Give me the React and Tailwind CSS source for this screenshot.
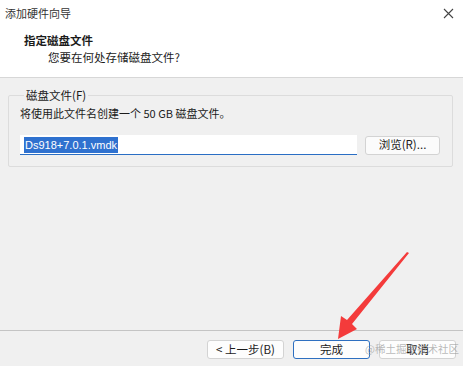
import React from "react";

const font = { fontFamily: '"Noto Sans CJK SC", "Noto Sans", sans-serif' };

function WinButton({ children, primary }) {
  return (
    <button
      className={`h-[19px] w-[77px] rounded-[3px] text-[11.5px] leading-none text-[#1b1b1b] flex items-center justify-center ${
        primary ? "border-[1.5px] border-[#2d6fc0] bg-[#fdfdfd]" : "border border-[#d3d3d3] bg-[#fdfdfd]"
      }`}
    >
      {children}
    </button>
  );
}

export default function App() {
  return (
    <div className="relative w-[463px] h-[366px] bg-[#f0f0f0] overflow-hidden flex flex-col text-[#1b1b1b]" style={font}>
      {/* header */}
      <div className="h-[78px] bg-white border-b border-[#d7d7d7] shrink-0">
        <div className="h-[26px] flex items-center justify-between pl-[5px] pr-[8px]">
          <span className="text-[11px] text-[#333]">添加硬件向导</span>
          <svg width="11" height="11" viewBox="0 0 11 11" className="mr-[1px]">
            <path d="M1 1 L10 10 M10 1 L1 10" stroke="#444" strokeWidth="1.1" />
          </svg>
        </div>
        <div className="pl-[24px] pt-[6px]">
          <div className="text-[11.5px] font-bold leading-[16px]">指定磁盘文件</div>
          <div className="pl-[24px] text-[11.5px] leading-[18px]">您要在何处存储磁盘文件?</div>
        </div>
      </div>

      {/* body */}
      <div className="flex-1 px-[8px] pt-[9px]">
        <fieldset className="border border-[#dcdcdc] rounded-[2px] px-[11px] pb-[11px] mr-[2px]">
          <legend className="ml-[4px] px-[2px] text-[11.5px] leading-[16px]">磁盘文件(F)</legend>
          <div className="text-[11px] leading-[18px] mt-[1px]">将使用此文件名创建一个 50 GB 磁盘文件。</div>
          <div className="flex items-center mt-[13px]">
            <div className="w-[337px] h-[20px] bg-white border-b-[1.5px] border-[#2a6ec4] flex items-center pl-[4px]">
              <span
                className="bg-[#2f71cf] text-white text-[11px] leading-[16px] px-[1px]"
                style={{ fontFamily: '"Liberation Sans", Arial, sans-serif' }}
              >
                Ds918+7.0.1.vmdk
              </span>
            </div>
            <button className="ml-[8px] h-[19px] w-[75px] rounded-[3px] border border-[#d3d3d3] bg-[#fbfbfb] text-[11.5px] leading-none flex items-center justify-center">
              浏览(R)...
            </button>
          </div>
        </fieldset>
      </div>

      {/* footer */}
      <div className="h-[36px] border-t border-[#c4c4c4] shrink-0 flex items-start justify-end gap-[9px] pr-[7px] pt-[9px]">
        <WinButton>&lt; 上一步(B)</WinButton>
        <WinButton primary>完成</WinButton>
        <WinButton>取消</WinButton>
      </div>

      {/* watermark */}
      <span className="absolute left-[365px] top-[341px] text-[10.5px] text-[#9a9a9a]/70 leading-[16px]">@稀土掘金技术社区</span>

      {/* red arrow annotation */}
      <svg className="absolute left-0 top-0 pointer-events-none" width="463" height="366">
        <polygon
          points="407,252 409,253 352,324 357,329 338,339 341,316 347,320"
          fill="#f43b3b"
        />
      </svg>
    </div>
  );
}
